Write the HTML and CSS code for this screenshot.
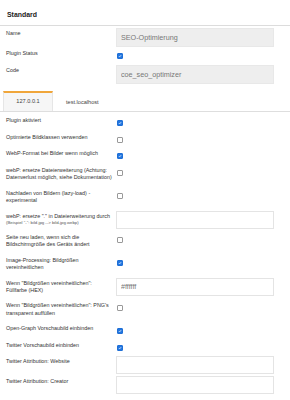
FILE: index.html
```html
<!DOCTYPE html>
<html lang="de">
<head>
    <meta charset="UTF-8">
    <meta name="viewport" content="width=device-width, initial-scale=1.0">
    <title>SEO-Optimierung</title>
    <link rel="stylesheet" href="styles.css">
</head>
<body>
    <div class="panel">
        <div class="panel-head">Standard</div>
        <div class="form">
            <div class="row field">
                <label>Name</label>
                <input class="text readonly" type="text" value="SEO-Optimierung" readonly>
            </div>
            <div class="row">
                <label>Plugin Status</label>
                <span class="check on"><svg viewBox="0 0 10 10"><path d="M2.2 5.3 4.2 7.3 7.9 2.8"/></svg></span>
            </div>
            <div class="row field">
                <label>Code</label>
                <input class="text readonly" type="text" value="coe_seo_optimizer" readonly>
            </div>
        </div>

        <div class="tabs">
            <div class="tab active">127.0.0.1</div>
            <div class="tab">test.localhost</div>
        </div>

        <div class="form tab-pane">
            <div class="row">
                <label>Plugin aktiviert</label>
                <span class="check on"><svg viewBox="0 0 10 10"><path d="M2.2 5.3 4.2 7.3 7.9 2.8"/></svg></span>
            </div>
            <div class="row">
                <label>Optimierte Bildklassen verwenden</label>
                <span class="check"></span>
            </div>
            <div class="row">
                <label>WebP-Format bei Bilder wenn möglich</label>
                <span class="check on"><svg viewBox="0 0 10 10"><path d="M2.2 5.3 4.2 7.3 7.9 2.8"/></svg></span>
            </div>
            <div class="row">
                <label>webP: ersetze Dateierweiterung (Achtung: Datenverlust möglich, siehe Dokumentation)</label>
                <span class="check"></span>
            </div>
            <div class="row">
                <label>Nachladen von Bildern (lazy-load) - experimental</label>
                <span class="check"></span>
            </div>
            <div class="row field">
                <label>webP: ersetze "." in Dateierweiterung durch <small>(Beispiel "-": bild.jpg --&gt; bild-jpg.webp)</small></label>
                <input class="text" type="text" value="">
            </div>
            <div class="row">
                <label>Seite neu laden, wenn sich die Bildschirmgröße des Geräts ändert</label>
                <span class="check"></span>
            </div>
            <div class="row">
                <label>Image-Processing: Bildgrößen vereinheitlichen</label>
                <span class="check on"><svg viewBox="0 0 10 10"><path d="M2.2 5.3 4.2 7.3 7.9 2.8"/></svg></span>
            </div>
            <div class="row field">
                <label>Wenn "Bildgrößen vereinheitlichen": Füllfarbe (HEX)</label>
                <input class="text" type="text" value="#ffffff">
            </div>
            <div class="row">
                <label>Wenn "Bildgrößen vereinheitlichen": PNG's transparent auffüllen</label>
                <span class="check"></span>
            </div>
            <div class="row">
                <label>Open-Graph Vorschaubild einbinden</label>
                <span class="check on"><svg viewBox="0 0 10 10"><path d="M2.2 5.3 4.2 7.3 7.9 2.8"/></svg></span>
            </div>
            <div class="row">
                <label>Twitter Vorschaubild einbinden</label>
                <span class="check on"><svg viewBox="0 0 10 10"><path d="M2.2 5.3 4.2 7.3 7.9 2.8"/></svg></span>
            </div>
            <div class="row field">
                <label>Twitter Attribution: Website</label>
                <input class="text" type="text" value="">
            </div>
            <div class="row field">
                <label>Twitter Attribution: Creator</label>
                <input class="text" type="text" value="">
            </div>
        </div>
    </div>
</body>
</html>
```

FILE: styles.css
```css
*{
    margin: 0;
    padding: 0;
    box-sizing: border-box;
}
body{
    background-color: #fff;
    font-family: "Liberation Sans", Arial, sans-serif;
    font-size: 5.4px;
    color: #333;
}
.panel{
    width: 290px;
    border-bottom: 1px solid #e2e2e2;
}
.panel-head{
    height: 26px;
    padding: 11px 0 0 7px;
    font-size: 6.9px;
    font-weight: bold;
    color: #222;
    border-bottom: 1px solid #dcdcdc;
}
.form{
    padding-left: 6px;
}
.row{
    display: grid;
    grid-template-columns: 110px 158px;
    align-items: start;
    padding: 3.75px 0;
}
.row label{
    line-height: 7.7px;
    padding-right: 3px;
}
.row label small{
    display: block;
    font-size: 4.3px;
    line-height: 6px;
    color: #555;
}
/* Eingabefeld ragt etwas über die Zeile hinaus */
.text{
    width: 158px;
    height: 18px;
    margin: -2px 0 -4px;
    padding-left: 4px;
    border: 1px solid #e4e4e4;
    background-color: #fff;
    font-family: "Liberation Sans", Arial, sans-serif;
    font-size: 7.2px;
    color: #777;
    outline: none;
}
.text.readonly{
    height: 19px;
    background-color: #eee;
    border-color: #e8e8e8;
}
.check{
    display: block;
    width: 6px;
    height: 6px;
    margin: 3px 0 0 1px;
    border: 1px solid #999;
    border-radius: 1px;
    background-color: #fff;
}
.check.on{
    border-color: #1f6fd6;
    background-color: #2477e0;
}
.check svg{
    display: block;
    width: 100%;
    height: 100%;
}
.check path{
    fill: none;
    stroke: #fff;
    stroke-width: 1.7;
}
.tabs{
    display: flex;
    margin-top: 7px;
    padding-left: 3px;
    border-bottom: 1px solid #dedede;
}
.tab{
    height: 20px;
    padding: 6px 13px 0;
    font-size: 5.6px;
    color: #444;
    border-top: 2px solid transparent;
}
.tab.active{
    width: 50px;
    text-align: center;
    padding: 5px 0 0;
    background-color: #f6f6f6;
    border-top-color: #f0a63a;
    border-left: 1px solid #e6e6e6;
    border-right: 1px solid #e6e6e6;
}
.tab-pane{
    padding-top: 2px;
    padding-bottom: 10px;
}
```
